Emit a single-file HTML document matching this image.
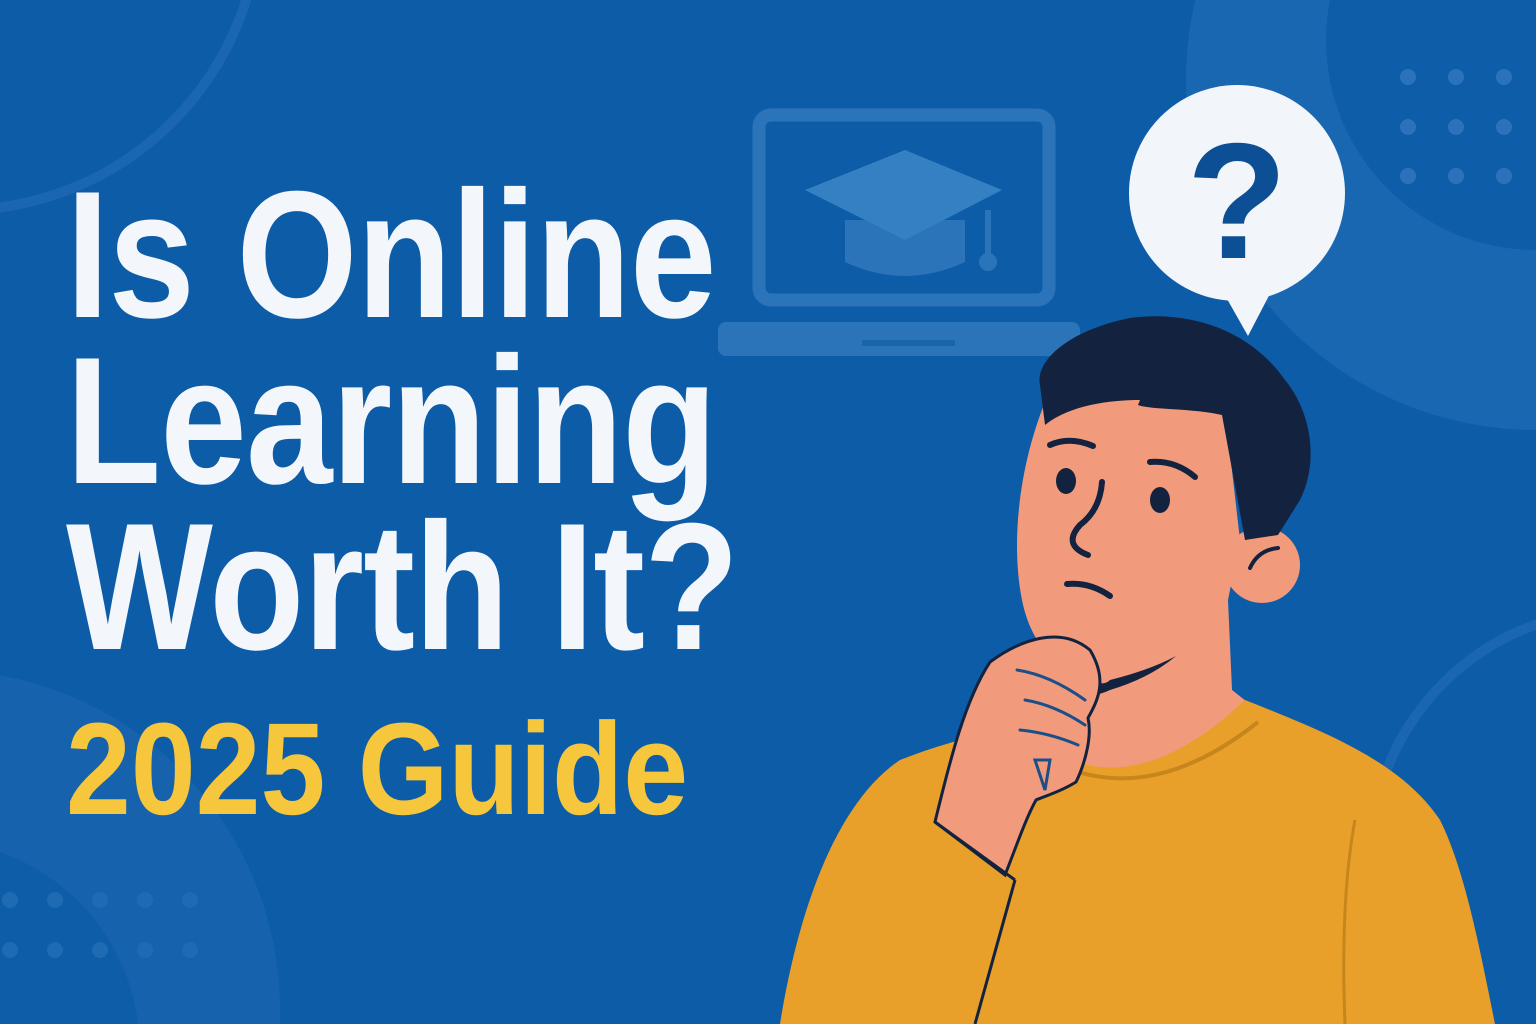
<!DOCTYPE html>
<html><head><style>
html,body{margin:0;padding:0;width:1536px;height:1024px;overflow:hidden;}
body{background:#0d5ca8;position:relative;font-family:"Liberation Sans",sans-serif;}
svg{position:absolute;left:0;top:0;}
.t{position:absolute;left:66px;font-weight:bold;color:#f3f6fa;font-size:181px;line-height:1;transform:scaleX(0.86);transform-origin:left top;white-space:nowrap;letter-spacing:-1px;}
.y{position:absolute;left:66px;font-weight:bold;color:#f6c63c;font-size:131px;line-height:1;transform:scaleX(0.89);transform-origin:left top;white-space:nowrap;}
</style></head><body>
<svg width="1536" height="1024" viewBox="0 0 1536 1024">
<circle cx="1536" cy="80" r="350" fill="#1a67b1"/>
<circle cx="1536" cy="40" r="210" fill="#0e5da9"/>
<circle cx="-60" cy="1010" r="340" fill="#1762ad"/>
<circle cx="-70" cy="1050" r="210" fill="#0e5da9"/>
<circle cx="-40" cy="-90" r="300" fill="none" stroke="#1a66b0" stroke-width="10"/>
<circle cx="1620" cy="860" r="250" fill="none" stroke="#1a66b0" stroke-width="10"/>
<g fill="#2a73ba">
<circle cx="1408" cy="77" r="8"/><circle cx="1456" cy="77" r="8"/><circle cx="1504" cy="77" r="8"/>
<circle cx="1408" cy="127" r="8"/><circle cx="1456" cy="127" r="8"/><circle cx="1504" cy="127" r="8"/>
<circle cx="1408" cy="176" r="8"/><circle cx="1456" cy="176" r="8"/><circle cx="1504" cy="176" r="8"/>
</g>
<g fill="#1f6bb3">
<circle cx="10" cy="900" r="8"/><circle cx="55" cy="900" r="8"/><circle cx="100" cy="900" r="8"/><circle cx="145" cy="900" r="8"/><circle cx="190" cy="900" r="8"/>
<circle cx="10" cy="950" r="8"/><circle cx="55" cy="950" r="8"/><circle cx="100" cy="950" r="8"/><circle cx="145" cy="950" r="8"/><circle cx="190" cy="950" r="8"/>
</g>
<rect x="759" y="115" width="290" height="185" rx="12" fill="none" stroke="#2b74ba" stroke-width="13"/>
<rect x="718" y="322" width="362" height="34" rx="8" fill="#2b74ba"/>
<rect x="862" y="340" width="93" height="6" fill="#1a64ac"/>
<path d="M845 220 L965 220 L965 262 Q905 290 845 262 Z" fill="#2b74ba"/>
<path d="M805 190 L905 150 L1002 190 L905 240 Z" fill="#3580c2"/>
<rect x="985" y="210" width="6" height="48" fill="#2b74ba"/>
<circle cx="988" cy="262" r="9" fill="#2b74ba"/>
<circle cx="1237" cy="193" r="108" fill="#f2f5f9"/>
<path d="M1222 290 L1248 336 L1274 286 Z" fill="#f2f5f9"/>
<text x="1237" y="258" text-anchor="middle" font-family="Liberation Sans" font-weight="bold" font-size="165" fill="#0d4f95">?</text>
<path d="M1048 395 C1100 395 1180 400 1225 410 L1240 540 L1228 600 L1232 690 L1270 720 L1160 790 L1060 760 L1080 690 C1050 660 1030 640 1022 600 C1010 540 1020 460 1048 395 Z" fill="#f29b7c"/>
<circle cx="1262" cy="565" r="38" fill="#f29b7c"/>
<path d="M1040 385 C1035 360 1070 330 1130 318 C1190 310 1250 330 1285 380 C1310 410 1320 460 1300 500 L1278 535 L1245 540 L1222 415 C1190 408 1150 410 1138 405 L1140 400 C1110 400 1070 405 1045 425 Z" fill="#13233f"/>
<g fill="none" stroke="#13233f" stroke-width="6" stroke-linecap="round">
<path d="M1050 445 Q1070 436 1093 446"/>
<path d="M1150 462 Q1175 460 1195 477"/>
<path d="M1102 482 Q1100 510 1080 525 Q1062 545 1088 555"/>
<path d="M1067 584 Q1090 582 1110 596"/>
<path d="M1250 568 Q1258 550 1278 548" stroke-width="4"/>
</g>
<ellipse cx="1066" cy="481" rx="10" ry="13" fill="#13233f"/>
<ellipse cx="1160" cy="500" rx="10" ry="13" fill="#13233f"/>
<path d="M1040 668 Q1060 650 1080 670 Q1100 690 1110 680 Q1150 670 1176 656 Q1150 678 1110 690 Q1090 700 1070 690 Z" fill="#13233f"/>
<path d="M780 1024 C800 900 840 800 900 760 C950 740 1000 730 1040 720 L1070 760 Q1150 790 1245 700 C1320 730 1400 760 1440 820 C1465 870 1480 950 1495 1024 Z" fill="#e8a02a"/>
<path d="M1072 770 Q1160 800 1258 722" fill="none" stroke="#c7861c" stroke-width="4"/>
<path d="M1355 820 Q1340 900 1345 1024" fill="none" stroke="#c7861c" stroke-width="3"/>
<path d="M1015 880 L975 1024" fill="none" stroke="#13233f" stroke-width="3"/>
<path d="M935 822 C950 760 965 700 990 662 C1020 640 1060 625 1090 650 C1108 680 1098 700 1088 718 C1093 740 1082 770 1076 782 C1060 792 1045 796 1036 800 C1025 820 1015 850 1005 875 Z" fill="#f29b7c" stroke="#13233f" stroke-width="3"/>
<path d="M935 822 L1015 880" stroke="#13233f" stroke-width="3"/>
<g fill="none" stroke="#1a4f8a" stroke-width="3" stroke-linecap="round">
<path d="M1017 670 Q1050 675 1085 700"/>
<path d="M1025 700 Q1055 705 1085 725"/>
<path d="M1020 730 Q1050 733 1078 745"/>
<path d="M1035 760 L1045 790 L1050 760 Z"/>
</g>
</svg>
<div class="t" style="top:165px">Is Online</div>
<div class="t" style="top:331px">Learning</div>
<div class="t" style="top:497px">Worth It?</div>
<div class="y" style="top:703px">2025 Guide</div>
</body></html>
